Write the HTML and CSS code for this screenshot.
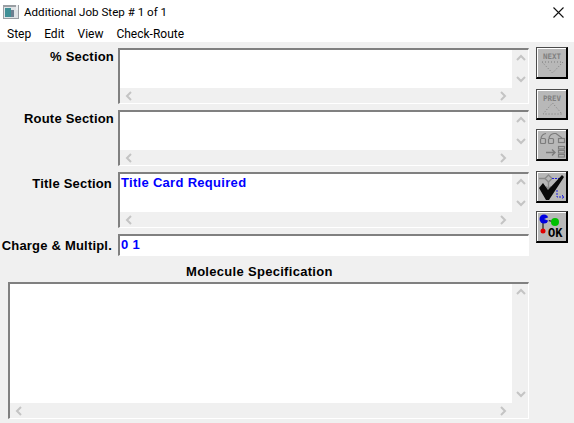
FILE: index.html
```html
<!doctype html>
<html lang="en">
<head>
	<meta charset="utf-8">
	<title>Additional Job Step # 1 of 1</title>
	<link rel="stylesheet" href="styles.css">
</head>
<body>
	<div class="titlebar">
		<svg class="appicon" width="16" height="14" viewBox="0 0 16 14">
			<rect x="0" y="0" width="16" height="14" fill="#9a9ea3"/>
			<rect x="1" y="2" width="14" height="11" fill="#dfe3e6"/>
			<rect x="2" y="3" width="6" height="9" fill="#3f8f96"/>
			<rect x="8" y="5" width="3" height="7" fill="#6c7f90"/>
			<rect x="13" y="0" width="2" height="5" fill="#eef0f2"/>
		</svg>
		<span class="titletext">Additional Job Step # 1 of 1</span>
		<svg class="closeicon" width="11" height="11" viewBox="0 0 11 11">
			<path d="M0.5 0.5L10.5 10.5M10.5 0.5L0.5 10.5" stroke="#111" stroke-width="1.1" fill="none"/>
		</svg>
	</div>
	<div class="menubar">
		<span class="menuitem">Step</span>
		<span class="menuitem">Edit</span>
		<span class="menuitem">View</span>
		<span class="menuitem">Check-Route</span>
	</div>

	<div class="content">
		<div class="form">
			<div class="row">
				<label class="fieldlabel">% Section</label>
				<div class="box box-section">
					<div class="textarea"></div>
					<div class="vbar">
						<svg class="arrow" width="10" height="7" viewBox="0 0 10 7"><path d="M1 6L5 2L9 6" /></svg>
						<svg class="arrow" width="10" height="7" viewBox="0 0 10 7"><path d="M1 1L5 5L9 1" /></svg>
					</div>
					<div class="hbar">
						<svg class="arrow" width="7" height="10" viewBox="0 0 7 10"><path d="M6 1L2 5L6 9" /></svg>
						<svg class="arrow" width="7" height="10" viewBox="0 0 7 10"><path d="M1 1L5 5L1 9" /></svg>
					</div>
				</div>
			</div>
			<div class="row">
				<label class="fieldlabel">Route Section</label>
				<div class="box box-section">
					<div class="textarea"></div>
					<div class="vbar">
						<svg class="arrow" width="10" height="7" viewBox="0 0 10 7"><path d="M1 6L5 2L9 6" /></svg>
						<svg class="arrow" width="10" height="7" viewBox="0 0 10 7"><path d="M1 1L5 5L9 1" /></svg>
					</div>
					<div class="hbar">
						<svg class="arrow" width="7" height="10" viewBox="0 0 7 10"><path d="M6 1L2 5L6 9" /></svg>
						<svg class="arrow" width="7" height="10" viewBox="0 0 7 10"><path d="M1 1L5 5L1 9" /></svg>
					</div>
				</div>
			</div>
			<div class="row">
				<label class="fieldlabel fieldlabel-lower">Title Section</label>
				<div class="box box-section">
					<div class="textarea">Title Card Required</div>
					<div class="vbar">
						<svg class="arrow" width="10" height="7" viewBox="0 0 10 7"><path d="M1 6L5 2L9 6" /></svg>
						<svg class="arrow" width="10" height="7" viewBox="0 0 10 7"><path d="M1 1L5 5L9 1" /></svg>
					</div>
					<div class="hbar">
						<svg class="arrow" width="7" height="10" viewBox="0 0 7 10"><path d="M6 1L2 5L6 9" /></svg>
						<svg class="arrow" width="7" height="10" viewBox="0 0 7 10"><path d="M1 1L5 5L1 9" /></svg>
					</div>
				</div>
			</div>
			<div class="row">
				<label class="fieldlabel fieldlabel-lower">Charge &amp; Multipl.</label>
				<div class="box box-input">0 1</div>
			</div>
			<div class="moltitle">Molecule Specification</div>
			<div class="box box-molecule">
				<div class="textarea"></div>
				<div class="vbar">
					<svg class="arrow" width="10" height="7" viewBox="0 0 10 7"><path d="M1 6L5 2L9 6" /></svg>
					<svg class="arrow" width="10" height="7" viewBox="0 0 10 7"><path d="M1 1L5 5L9 1" /></svg>
				</div>
				<div class="hbar">
					<svg class="arrow" width="7" height="10" viewBox="0 0 7 10"><path d="M6 1L2 5L6 9" /></svg>
					<svg class="arrow" width="7" height="10" viewBox="0 0 7 10"><path d="M1 1L5 5L1 9" /></svg>
				</div>
			</div>
		</div>

		<div class="tools">
			<div class="toolbtn">
				<svg width="28" height="28" viewBox="0 0 28 28">
					<text class="dimtext" x="14" y="10" text-anchor="middle">NEXT</text>
					<path class="dots" d="M4 13H25L14.5 24Z"/>
				</svg>
			</div>
			<div class="toolbtn toolbtn-prev">
				<svg width="28" height="27" viewBox="0 0 28 27">
					<text class="dimtext" x="14" y="10" text-anchor="middle">PREV</text>
					<path class="dots" d="M14.5 12L24 23H5Z"/>
				</svg>
			</div>
			<div class="toolbtn toolbtn-route">
				<svg width="28" height="28" viewBox="0 0 28 28">
					<g fill="none" stroke="#7c7c7c" stroke-width="1.2">
						<rect x="2.5" y="7.5" width="5" height="5" rx="1"/>
						<rect x="10.5" y="7.5" width="5" height="5" rx="1"/>
						<rect x="20.5" y="7.5" width="6" height="4"/>
						<path d="M3 7Q4 3 8 2.5M11 7Q12 3 16 2.5L18 2.5L24 7"/>
						<rect x="20.5" y="15.5" width="6" height="2.5"/>
						<rect x="20.5" y="19.5" width="6" height="2.5"/>
						<rect x="20.5" y="23.5" width="6" height="2.5"/>
						<path d="M8 21.5H17M14 18.5L17 21.5L14 24.5" stroke-width="1.4"/>
					</g>
				</svg>
			</div>
			<div class="toolbtn toolbtn-check">
				<svg width="28" height="28" viewBox="0 0 28 28">
					<g fill="none" stroke="#8a8a8a" stroke-width="1.4">
						<path d="M10.5 2L14 5.5L10.5 9L7 5.5Z"/>
						<path d="M1 5.5H7M10.5 9V16M8 13.5L10.5 16L13 13.5"/>
					</g>
					<path d="M14 5.5H23M19 17V24H26M24 22L26 24L24 26" fill="none" stroke="#2222dd" stroke-width="1" stroke-dasharray="2 1"/>
					<path d="M1 15L5 10L10 17L24 2L26 4L11 27H8Z" fill="#0a0a0a"/>
				</svg>
			</div>
			<div class="toolbtn toolbtn-ok">
				<svg width="28" height="28" viewBox="0 0 28 28">
					<path d="M5 8V18M8 7L17 9" stroke="#000" stroke-width="1" fill="none"/>
					<circle cx="6" cy="6" r="4.5" fill="#0000e0"/>
					<path d="M6 6L11 4V8Z" fill="#b8b8b8"/>
					<circle cx="17" cy="9" r="4" fill="#00c000"/>
					<circle cx="5" cy="18" r="2.5" fill="#e00000"/>
					<text class="oktext" x="10" y="24">OK</text>
				</svg>
			</div>
		</div>
	</div>
</body>
</html>
```

FILE: styles.css
```css
html, body { margin: 0; padding: 0; }
body {
	width: 574px;
	height: 423px;
	overflow: hidden;
	background-color: #f0f0f0;
	font-family: "Liberation Sans", sans-serif;
}

.titlebar {
	display: flex;
	align-items: center;
	height: 24px;
	padding: 0 10px 0 3px;
	background-color: #fff;
}
.appicon { flex: none; }
.titletext {
	margin-left: 5px;
	flex: 1;
	font: 11.6px Roboto, sans-serif;
	color: #000;
	white-space: nowrap;
}
.closeicon { flex: none; }

.menubar {
	display: flex;
	align-items: center;
	height: 18px;
	padding: 1px 0 0 0.5px;
	box-sizing: border-box;
	background-color: #fff;
	font: 12px Roboto, sans-serif;
	color: #000;
}
.menuitem { padding: 0 6.5px; }

.content {
	display: flex;
	padding-top: 6px;
}
.form {
	display: flex;
	flex-direction: column;
	gap: 6px;
	width: 529px;
}
.row { display: flex; }

.fieldlabel {
	flex: none;
	box-sizing: border-box;
	width: 118px;
	padding: 1px 4px 0 0;
	text-align: right;
	font-size: 13px;
	font-weight: bold;
	letter-spacing: 0.2px;
	line-height: 15px;
	color: #000;
	white-space: nowrap;
}
.fieldlabel-lower { padding: 4px 6px 0 0; }

.box {
	box-sizing: border-box;
	border-top: 2px solid #808080;
	border-left: 2px solid #808080;
	border-right: 1px solid #fff;
	border-bottom: 1px solid #fff;
}
.box-section, .box-molecule {
	display: grid;
	grid-template-columns: 1fr 16px;
	grid-template-rows: 1fr 15px;
}
.box-section { flex: 1; height: 56px; }
.box-molecule { margin-left: 8px; height: 137px; }
.box-input {
	flex: 1;
	height: 22px;
	padding: 1px 0 0 1px;
	background-color: #fff;
	font-size: 13px;
	font-weight: bold;
	letter-spacing: 0.3px;
	line-height: 15px;
	color: #0000ff;
}

.textarea {
	padding: 1px 0 0 1px;
	background-color: #fff;
	font-size: 13px;
	font-weight: bold;
	letter-spacing: 0.3px;
	line-height: 15px;
	color: #0000ff;
}
.vbar {
	display: flex;
	flex-direction: column;
	justify-content: space-between;
	align-items: center;
	padding: 4px 0 5px 1px;
	min-height: 0;
}
.hbar {
	display: flex;
	justify-content: space-between;
	align-items: center;
	padding: 0 5px 0 5px;
	grid-column: 1;
}
.arrow path {
	fill: none;
	stroke: #c4c4c4;
	stroke-width: 2;
}

.moltitle {
	margin: 2px 0 -3px 186px;
	font-size: 13px;
	font-weight: bold;
	letter-spacing: 0.3px;
	line-height: 15px;
	color: #000;
	white-space: nowrap;
}

.tools {
	display: flex;
	flex-direction: column;
	margin: -1px 0 0 7px;
}
.toolbtn {
	box-sizing: border-box;
	display: flex;
	align-items: center;
	justify-content: center;
	width: 32px;
	height: 32px;
	margin-bottom: 10px;
	background-color: #b8b8b8;
	border-top: 1px solid #4a4a4a;
	border-left: 1px solid #4a4a4a;
	border-right: 2px solid #000;
	border-bottom: 2px solid #000;
	box-shadow: inset 1px 1px 0 #fff;
}
.toolbtn-prev { height: 31px; margin-bottom: 9px; }
.toolbtn-ok { margin-bottom: 0; margin-top: -2px; }

.dimtext {
	font: bold 7.5px "DejaVu Sans Mono", monospace;
	fill: #808080;
}
.dots {
	fill: none;
	stroke: #7c7c7c;
	stroke-width: 1;
	stroke-dasharray: 1 2;
}
.oktext {
	font: bold 12px "Liberation Mono", monospace;
	fill: #000;
}
```
